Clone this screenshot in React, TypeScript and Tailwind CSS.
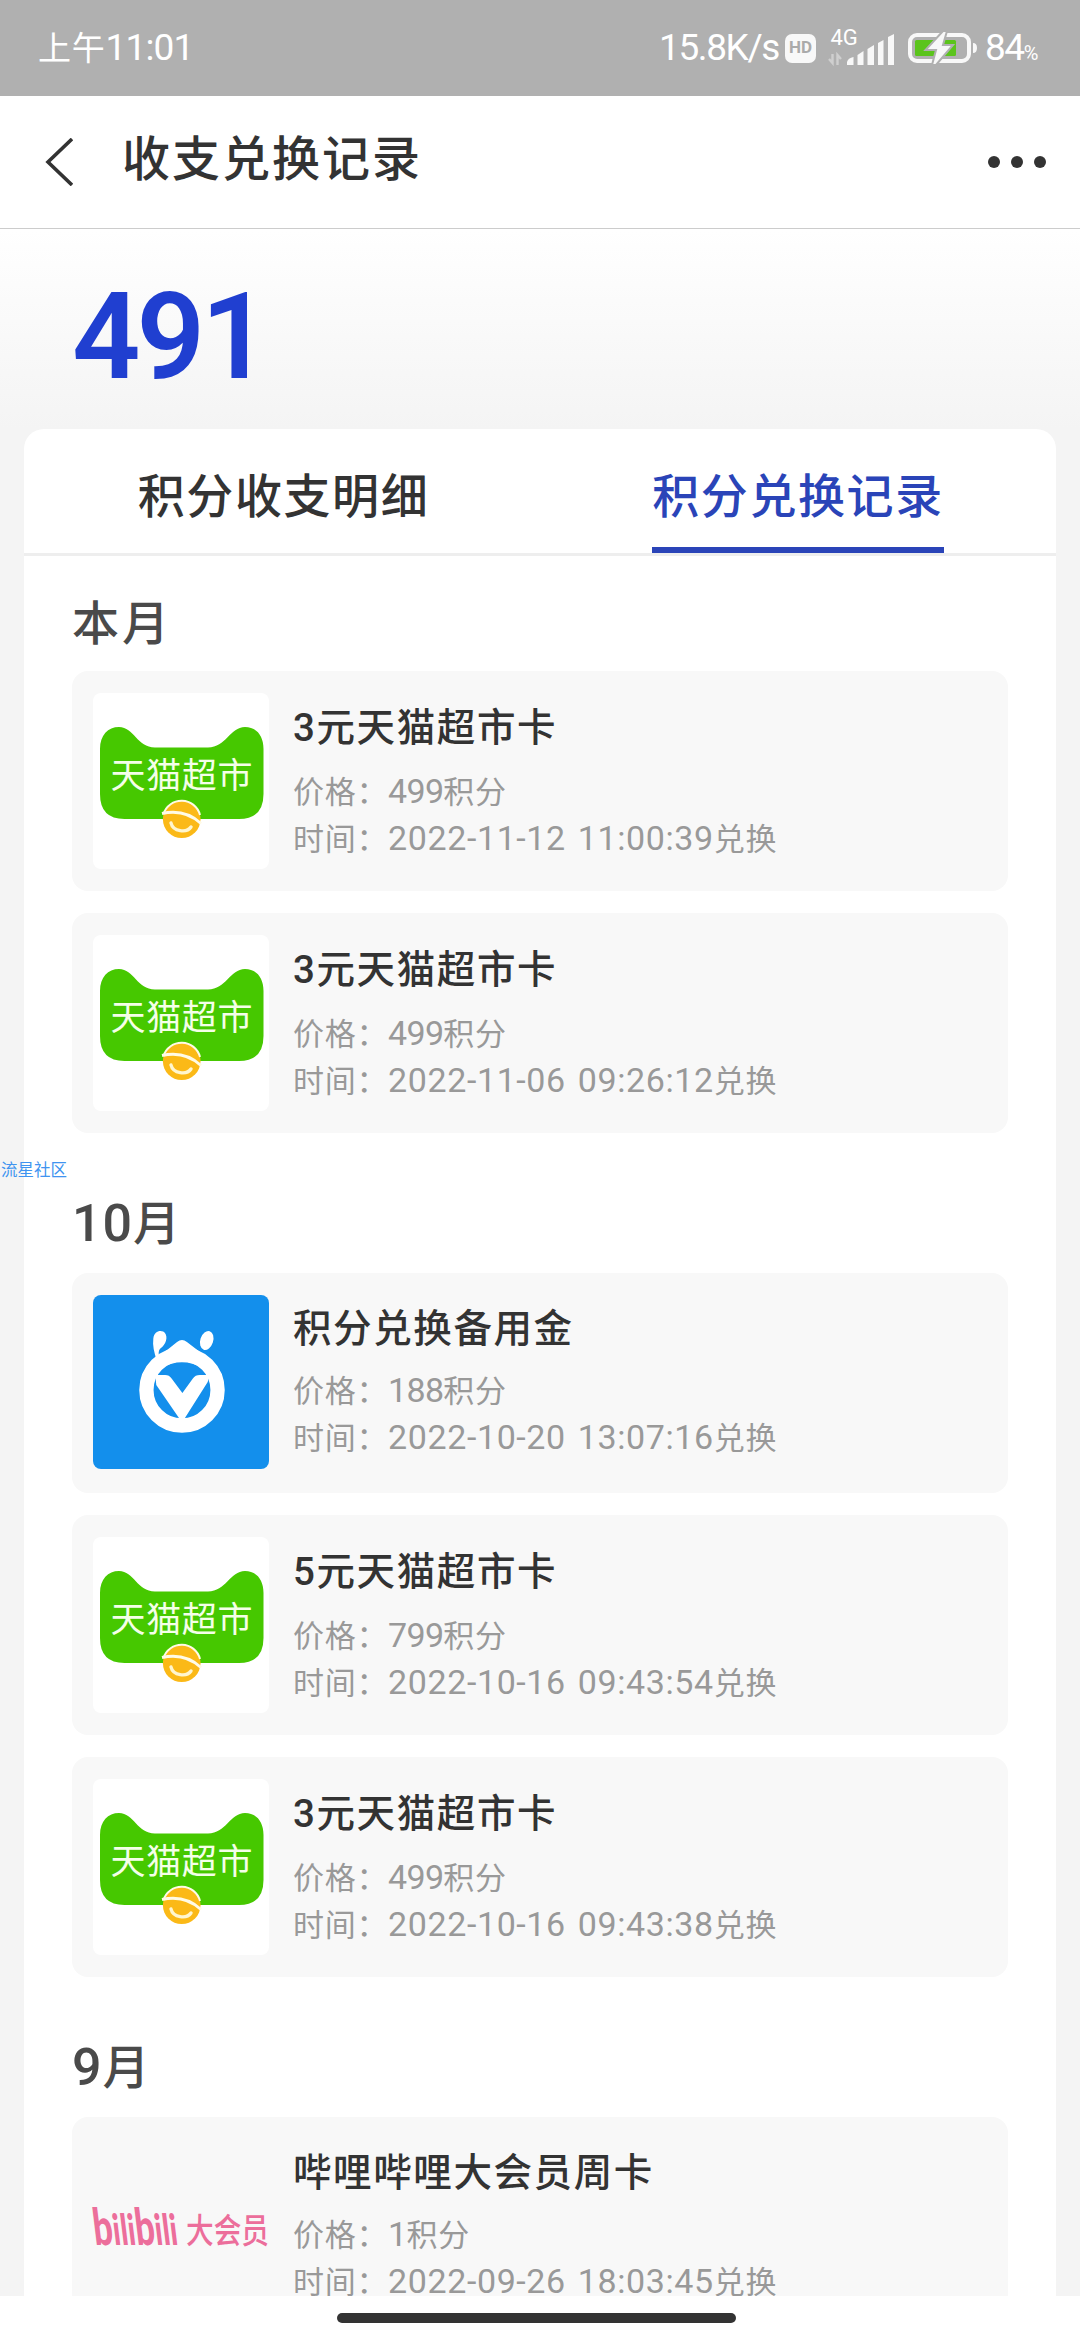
type Thumb = "tmall" | "reserve" | "bilibili";

type ExchangeRecord = {
  id: number;
  title: string;
  thumb: Thumb;
  price: string;
  time: string;
};

type MonthGroup = {
  num: string;
  label: string;
  records: ExchangeRecord[];
};

const groups: MonthGroup[] = [
  {
    num: "",
    label: "本月",
    records: [
      { id: 1, title: "3元天猫超市卡", thumb: "tmall", price: "499", time: "2022-11-12 11:00:39" },
      { id: 2, title: "3元天猫超市卡", thumb: "tmall", price: "499", time: "2022-11-06 09:26:12" },
    ],
  },
  {
    num: "10",
    label: "月",
    records: [
      { id: 3, title: "积分兑换备用金", thumb: "reserve", price: "188", time: "2022-10-20 13:07:16" },
      { id: 4, title: "5元天猫超市卡", thumb: "tmall", price: "799", time: "2022-10-16 09:43:54" },
      { id: 5, title: "3元天猫超市卡", thumb: "tmall", price: "499", time: "2022-10-16 09:43:38" },
    ],
  },
  {
    num: "9",
    label: "月",
    records: [
      { id: 6, title: "哔哩哔哩大会员周卡", thumb: "bilibili", price: "1", time: "2022-09-26 18:03:45" },
    ],
  },
];

function TmallLogo() {
  return (
    <svg viewBox="0 0 176 176" className="w-full h-full">
      <path
        d="M7 56C7 42 15 34 26 34C41 34 44 54.5 62 54.5H115C133 54.5 137 34 152 34C163 34 170.5 42 170.5 56V101Q170.5 126 146 126H31.5Q7 126 7 101Z"
        fill="#46c800"
      />
      <text x="17.5" y="95" fontSize="35" textLength="142" fill="#f4ffe8">
        天猫超市
      </text>
      <circle cx="88.7" cy="126.3" r="18.8" fill="#fbb917" />
      <path d="M70.5 121A19 19 0 0 1 107 122" fill="none" stroke="#fffbe6" strokeWidth="2" />
      <path d="M69 120.5Q92 115.5 108 130.5" fill="none" stroke="#fffbe6" strokeWidth="3" />
      <path d="M78 130C80 139 94 140 98 134" fill="none" stroke="#fff6cf" strokeWidth="3.4" strokeLinecap="round" />
    </svg>
  );
}

function ReserveLogo() {
  return (
    <svg viewBox="0 0 176 176" className="w-full h-full bg-[#138fec]">
      <circle cx="89" cy="96" r="36" fill="none" stroke="#fff" strokeWidth="14.5" />
      <path d="M56 70L84 47.5Q89 43.5 94 47.5L122 69L110 74Q89 62 68 74Z" fill="#fff" />
      <path d="M62 81H72Q76 81 78.5 84.5L89.4 99L100 84.5Q102.500 81 107 81H117L115 88L91 126H87L63 91Z" fill="#fff" />
      <path d="M60 44C61 37 66 35.5 70 37C75 40 74 48 69 52.5C65 55 65 58 66 64L63 65C61 58 59 51 60 44Z" fill="#fff" />
      <ellipse cx="114" cy="46" rx="6.5" ry="9.8" transform="rotate(18 114 46)" fill="#fff" />
    </svg>
  );
}

function BilibiliLogo() {
  return (
    <svg viewBox="0 0 176 176" className="w-full h-full overflow-visible">
      <g fill="#ec6e9b">
        <text
          x="-11"
          y="106"
          fontSize="51"
          fontWeight="900"
          textLength="84"
          lengthAdjust="spacingAndGlyphs"
          fontFamily="Lato, sans-serif"
          transform="skewX(7)"
        >
          b<tspan fontSize="43">ili</tspan>b<tspan fontSize="43">ili</tspan>
        </text>
        <text
          x="93"
          y="103.5"
          fontSize="34"
          fontWeight="500"
          textLength="83"
          lengthAdjust="spacingAndGlyphs"
        >
          大会员
        </text>
      </g>
    </svg>
  );
}

function RecordThumb({ thumb }: { thumb: Thumb }) {
  if (thumb === "reserve") {
    return (
      <div className="w-44 h-[174px] shrink-0 rounded-lg overflow-hidden">
        <ReserveLogo />
      </div>
    );
  }
  if (thumb === "bilibili") {
    return (
      <div className="w-44 h-44 shrink-0">
        <BilibiliLogo />
      </div>
    );
  }
  return (
    <div className="w-44 h-44 shrink-0 rounded-lg bg-white">
      <TmallLogo />
    </div>
  );
}

function RecordCard({ record }: { record: ExchangeRecord }) {
  const startsWithDigit = /^\d/.test(record.title);

  return (
    <div className="flex h-[220px] rounded-2xl bg-[#f8f8f8] pl-[21px] pt-[22px]">
      <RecordThumb thumb={record.thumb} />
      <div className="ml-6 whitespace-nowrap">
        <h3
          className={
            startsWithDigit
              ? "mt-[10px] h-[65px] text-[38.5px] leading-[50px] font-medium tracking-[1.6px] text-[#333]"
              : "mt-[9px] h-[63px] text-[38.5px] leading-[50px] font-medium tracking-[1.6px] text-[#333]"
          }
        >
          {record.title}
        </h3>
        <p className="h-[47px] leading-[47px] text-[31px] tracking-[0.7px] text-[#999]">
          价格：<span className="text-[34px] tracking-[-0.7px]">{record.price}</span>积分
        </p>
        <p className="h-[47px] leading-[47px] text-[31px] tracking-[0.7px] text-[#999]">
          时间：
          <span className="text-[34px] tracking-[0.6px] [word-spacing:3px]">{record.time}</span>
          兑换
        </p>
      </div>
    </div>
  );
}

function StatusBar() {
  return (
    <div className="flex h-24 shrink-0 items-center bg-[#b0b0b0] pl-[38px] pr-[43px] text-white">
      <span className="text-[33px] tracking-[0.7px]">
        上午<span className="text-[37px] tracking-[-0.8px]">11:01</span>
      </span>
      <div className="ml-auto flex items-center">
        <span className="text-[37px] tracking-[-1.4px]">15.8K/s</span>
        <span className="ml-[6px] flex h-[29px] w-[31px] items-center justify-center rounded-[7px] bg-[#f8f8f8] text-[17px] font-bold text-[#aaa]">
          HD
        </span>
        <svg viewBox="0 0 66 38" className="ml-3 h-[38px] w-[66px] overflow-visible">
          <text x="2.5" y="16" fontSize="22" fill="#fff">
            4G
          </text>
          <path d="M4.5 25V34L1 30M9.5 36V26L13 30" fill="none" stroke="#cfcfcf" strokeWidth="2.4" />
          <g fill="#f8f8f8">
            <path d="M19 33Q20 29 25.5 28V36H19Z" />
            <path d="M29.5 26L35.5 22V36H29.500Z" />
            <path d="M39.5 20L46 16V36H39.500Z" />
            <path d="M50 14L55.5 11V36H50Z" />
            <path d="M60 8L66 5V36H60Z" />
          </g>
        </svg>
        <svg viewBox="0 0 70 34" className="ml-[14px] h-[34px] w-[70px]">
          <rect x="2" y="4" width="59" height="26" rx="7" fill="none" stroke="#f8f8f8" strokeWidth="4" />
          <rect x="7" y="9" width="41" height="16" rx="1.5" fill="#5bc41c" />
          <path d="M65 12Q69 12 69 17Q69 22 65 22Z" fill="#f8f8f8" />
          <path
            d="M35 0L17.5 19H28L24 34H28L45 14H35L39 0Z"
            fill="#f8f8f8"
            stroke="#b0b0b0"
            strokeWidth="2"
          />
        </svg>
        <span className="ml-[7px] text-[37px] tracking-[-1.4px]">
          84<span className="text-[20px]">%</span>
        </span>
      </div>
    </div>
  );
}

function NavBar() {
  return (
    <div className="flex h-[133px] shrink-0 items-center border-b border-[#ccc] bg-white pl-[45px] pr-[34px]">
      <svg viewBox="0 0 28 48" className="h-12 w-7" fill="none" stroke="#333" strokeWidth="3.6">
        <path d="M27 1L3 24L27 47" />
      </svg>
      <h1 className="ml-[49px] pb-[5px] text-[48px] font-medium tracking-[2px] text-[#333]">收支兑换记录</h1>
      <div className="ml-auto flex gap-[11px]">
        <span className="h-3 w-3 rounded-full bg-[#333]" />
        <span className="h-3 w-3 rounded-full bg-[#333]" />
        <span className="h-3 w-3 rounded-full bg-[#333]" />
      </div>
    </div>
  );
}

export default function App() {
  return (
    <div className="relative flex h-[2340px] w-[1080px] flex-col overflow-hidden bg-[#f4f4f4] font-[Roboto,'Noto_Sans_CJK_SC',sans-serif]">
      <StatusBar />
      <NavBar />

      <div className="flex min-h-0 flex-1 flex-col overflow-hidden">
        {/* Points balance */}
        <div className="h-[200px] shrink-0 bg-linear-to-b from-white to-[#f4f4f4] pl-[72px] pt-[48px]">
          <div className="text-[120px] leading-[120px] font-semibold tracking-[-4px] text-[#203fd0]">491</div>
        </div>

        <div className="mx-6 flex-1 rounded-t-[20px] bg-white">
          {/* Tabs */}
          <div className="grid h-[127px] grid-cols-2 border-b-[3px] border-[#eee] text-[47px] font-medium tracking-[1.6px]">
            <div className="flex justify-center pl-[3px] text-[#333]">
              <span className="h-[124px] leading-[136px]">积分收支明细</span>
            </div>
            <div className="flex justify-center text-[#2a44b8]">
              <span className="h-[124px] border-b-[6px] border-[#2a44b8] leading-[136px]">积分兑换记录</span>
            </div>
          </div>

          {/* Records by month */}
          <div className="px-12">
            {groups.map((group, index) => (
              <section key={index}>
                <h2
                  className={
                    index === 0
                      ? "mt-[20px] mb-[-1px] flex h-24 items-center text-[47px] font-medium tracking-[3px] text-[#4a4a4a]"
                      : "mt-[43px] mb-px flex h-24 items-center text-[47px] font-medium tracking-[3px] text-[#4a4a4a]"
                  }
                >
                  {group.num && <span className="text-[52px] tracking-[1px]">{group.num}</span>}
                  {group.label}
                </h2>
                <div className="flex flex-col gap-[22px]">
                  {group.records.map((record) => (
                    <RecordCard key={record.id} record={record} />
                  ))}
                </div>
              </section>
            ))}
          </div>
        </div>
      </div>

      {/* Home indicator */}
      <div className="flex h-11 shrink-0 justify-center bg-white pt-[17px] pr-[7px]">
        <div className="h-[10px] w-[399px] rounded-full bg-[#333]" />
      </div>

      <span className="absolute left-[1px] top-[1158px] text-[16.5px] leading-[25px] text-[#4094f0]">流星社区</span>
    </div>
  );
}
